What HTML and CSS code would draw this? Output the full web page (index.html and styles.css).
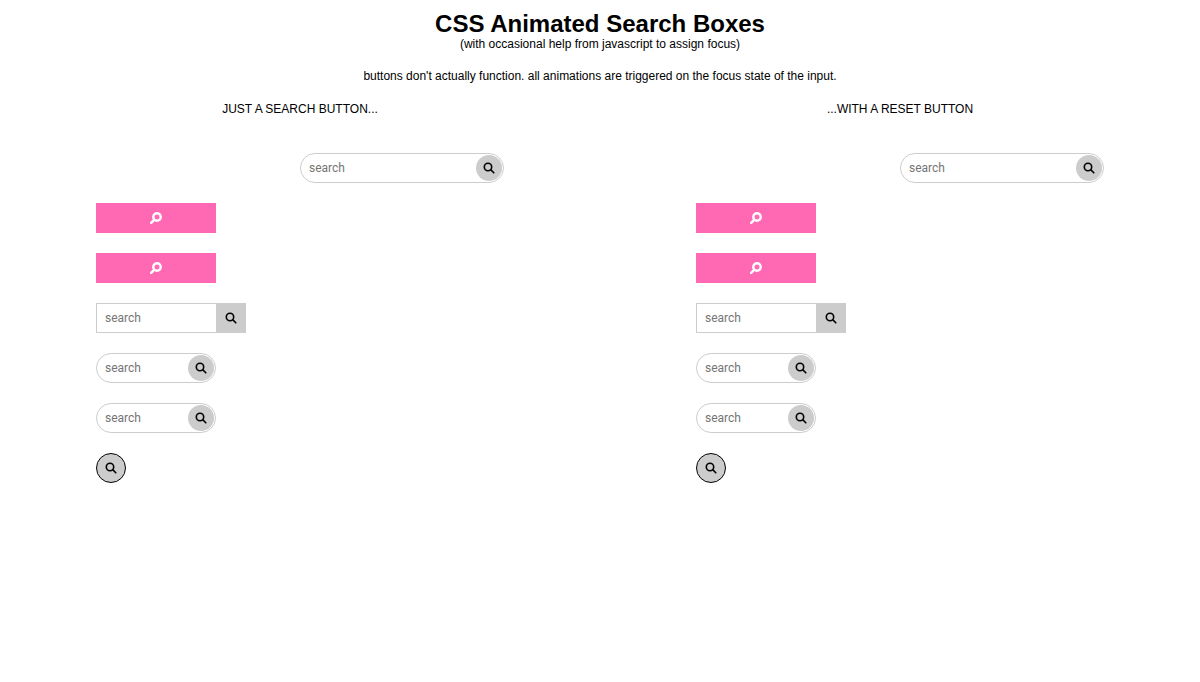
FILE: index.html
```html
<!DOCTYPE html>
<html lang="en">
<head>
<meta charset="utf-8">
<title>CSS Animated Search Boxes</title>
<link rel="stylesheet" href="styles.css">
</head>
<body>
<svg class="defs" width="0" height="0" aria-hidden="true">
  <symbol id="lens" viewBox="0 0 12 12">
    <circle cx="5" cy="5" r="3.7" fill="none"/>
    <path d="M7.9 7.9L10.8 10.8" fill="none" stroke-linecap="round"/>
  </symbol>
</svg>
<header class="intro">
  <h1 class="title">CSS Animated Search Boxes</h1>
  <p class="sub">(with occasional help from javascript to assign focus)</p>
  <p class="note">buttons don't actually function. all animations are triggered on the focus state of the input.</p>
</header>
<main class="cols">
  <section class="col">
    <h2 class="col-title">JUST A SEARCH BUTTON...</h2>
    <div class="rows">
      <form class="box pill wide"><input class="field" placeholder="search"><button class="btn" type="button"><svg class="ico"><use href="#lens"/></svg></button></form>
      <form class="box pink"><button class="btn" type="button"><svg class="ico flip"><use href="#lens"/></svg></button></form>
      <form class="box pink"><button class="btn" type="button"><svg class="ico flip"><use href="#lens"/></svg></button></form>
      <form class="box square"><input class="field" placeholder="search"><button class="btn" type="button"><svg class="ico"><use href="#lens"/></svg></button></form>
      <form class="box pill"><input class="field" placeholder="search"><button class="btn" type="button"><svg class="ico"><use href="#lens"/></svg></button></form>
      <form class="box pill"><input class="field" placeholder="search"><button class="btn" type="button"><svg class="ico"><use href="#lens"/></svg></button></form>
      <form class="box round"><button class="btn" type="button"><svg class="ico"><use href="#lens"/></svg></button></form>
    </div>
  </section>
  <section class="col">
    <h2 class="col-title">...WITH A RESET BUTTON</h2>
    <div class="rows">
      <form class="box pill wide"><input class="field" placeholder="search"><button class="btn" type="button"><svg class="ico"><use href="#lens"/></svg></button></form>
      <form class="box pink"><button class="btn" type="button"><svg class="ico flip"><use href="#lens"/></svg></button></form>
      <form class="box pink"><button class="btn" type="button"><svg class="ico flip"><use href="#lens"/></svg></button></form>
      <form class="box square"><input class="field" placeholder="search"><button class="btn" type="button"><svg class="ico"><use href="#lens"/></svg></button></form>
      <form class="box pill"><input class="field" placeholder="search"><button class="btn" type="button"><svg class="ico"><use href="#lens"/></svg></button></form>
      <form class="box pill"><input class="field" placeholder="search"><button class="btn" type="button"><svg class="ico"><use href="#lens"/></svg></button></form>
      <form class="box round"><button class="btn" type="button"><svg class="ico"><use href="#lens"/></svg></button></form>
    </div>
  </section>
</main>
</body>
</html>
```

FILE: styles.css
```css
* { box-sizing: border-box; }
html, body { margin: 0; padding: 0; }
body { background: #fff; color: #000; font-family: "Liberation Sans", Arial, sans-serif; font-size: 12px; }
.defs { position: absolute; }
.intro { text-align: center; padding-top: 10px; }
.title { margin: 0; font-size: 24px; line-height: 27px; font-weight: 700; }
.sub { margin: 0; font-size: 12px; line-height: 14px; }
.note { margin: 18px 0 0; font-size: 12px; line-height: 14px; }
.cols { display: grid; grid-template-columns: 1fr 1fr; margin-top: 19px; }
.col-title { margin: 0; text-align: center; font-size: 12px; line-height: 14px; font-weight: 400; }
.rows { display: flex; flex-direction: column; align-items: flex-start; gap: 20px; padding: 37px 0 0 96px; }

.box { display: flex; width: 120px; height: 30px; margin: 0; }
.field { flex: 1 1 auto; min-width: 0; height: 100%; margin: 0; padding: 0 8px; border: 1px solid #ccc; background: #fff; font-family: Roboto, sans-serif; font-size: 12px; outline: none; }
.field::placeholder { color: #757575; opacity: 1; }
.btn { display: flex; align-items: center; justify-content: center; flex: none; margin: 0; padding: 0; border: 0; background: #ccc; color: #000; }
.ico { display: block; width: 12px; height: 12px; stroke: #000; stroke-width: 1.6; }
.flip { transform: scaleX(-1); stroke: #fff; stroke-width: 2.4; }

.pill { position: relative; }
.pill .field { border-radius: 15px; }
.pill .btn { position: absolute; top: 2px; right: 2px; width: 26px; height: 26px; border-radius: 50%; }
.wide { width: 204px; margin-left: 204px; }
.pink .btn { width: 100%; height: 100%; background: #ff69b4; }
.square { width: 150px; }
.square .field { width: 120px; flex: none; border-right: 0; }
.square .btn { width: 30px; height: 30px; }
.round { width: 30px; }
.round .btn { width: 30px; height: 30px; border: 1px solid #000; border-radius: 50%; }
```
